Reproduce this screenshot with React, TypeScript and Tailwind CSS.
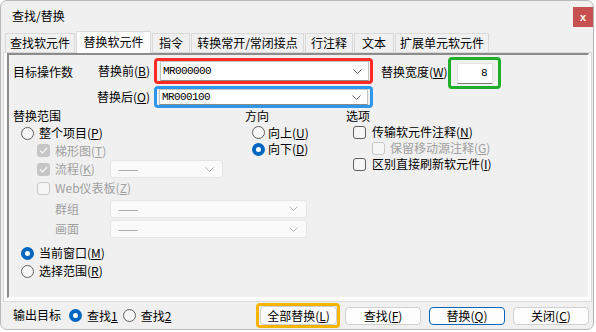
import React from "react";

const tabs = [
    { label: "查找软元件", w: 70 },
    { label: "替换软元件", w: 75, active: true },
    { label: "指令", w: 38 },
    { label: "转换常开/常闭接点", w: 113 },
    { label: "行注释", w: 48 },
    { label: "文本", w: 40 },
    { label: "扩展单元软元件", w: 94 },
];

function U({ children }: { children: React.ReactNode }) {
    return <span className="underline underline-offset-1">{children}</span>;
}

function Chevron({ color = "#5f5f5f" }: { color?: string }) {
    return (
        <svg width="9" height="5" viewBox="0 0 9 5">
            <path d="M0.5 0.5 L4.5 4.5 L8.5 0.5" fill="none" stroke={color} strokeWidth="1" />
        </svg>
    );
}

function Radio({ checked }: { checked?: boolean }) {
    if (checked) {
        return (
            <span className="flex h-[13px] w-[13px] shrink-0 items-center justify-center rounded-full bg-[#0067c0]">
                <span className="h-[5px] w-[5px] rounded-full bg-white" />
            </span>
        );
    }
    return <span className="h-[13px] w-[13px] shrink-0 rounded-full border border-[#5f5f5f] bg-[#f6f6f6]" />;
}

function Check({ checked, disabled }: { checked?: boolean; disabled?: boolean }) {
    if (checked) {
        return (
            <span className="flex h-[13px] w-[13px] shrink-0 items-center justify-center rounded-[3px] bg-[#c6c6c6]">
                <svg width="9" height="7" viewBox="0 0 9 7">
                    <path d="M1 3.5 L3.5 6 L8 1" fill="none" stroke="#f4f4f4" strokeWidth="1.3" />
                </svg>
            </span>
        );
    }
    return (
        <span
            className={`h-[13px] w-[13px] shrink-0 rounded-[3px] border ${disabled ? "border-[#c8c8c8] bg-[#f6f6f6]" : "border-[#5f5f5f] bg-[#f6f6f6]"
                }`}
        />
    );
}

function DisabledCombo({ w, h }: { w: string; h: string }) {
    return (
        <div className={`flex shrink-0 items-center justify-between rounded-[3px] border border-[#e6e6e6] bg-[#fafafa] pl-[7px] pr-[8px] text-[#9a9a9a] ${w} ${h}`}>
            <span className="leading-[14px]">——</span>
            <Chevron color="#b4b4b4" />
        </div>
    );
}

function Combo({ value, h }: { value: string; h: string }) {
    return (
        <div className={`flex w-[209px] shrink-0 items-center justify-between border border-[#c4c4c4] border-b-[#8a8a8a] bg-white pl-[2px] pr-[6px] ${h}`}>
            <span className="font-['Liberation_Mono',monospace] text-[11px] leading-[14px] tracking-[-0.6px]">{value}</span>
            <Chevron />
        </div>
    );
}

function Btn({ children, primary }: { children: React.ReactNode; primary?: boolean }) {
    return (
        <div
            className={`flex h-[18px] w-[76px] shrink-0 items-center justify-center rounded-[4px] border bg-[#fdfdfd] leading-[14px] ${primary ? "border-[#0067c0]" : "border-[#d0d0d0]"
                }`}
        >
            {children}
        </div>
    );
}

export default function App() {
    return (
        <div className="h-[332px] w-[596px] bg-white font-['Noto_Sans_CJK_SC','Noto_Sans_CJK_JP',sans-serif] text-[12px] leading-[16px] text-black">
            <div className="flex h-[330px] w-[594px] flex-col overflow-hidden rounded-[7px] border border-[#b8b8b8] bg-[#f0f0f0]">
                {/* Title */}
                <div className="flex h-[29px] shrink-0 items-start justify-between">
                    <span className="ml-[11px] mt-[7px]">查找/替换</span>
                    <div className="mt-[6px] flex h-[20px] w-[20px] items-center justify-center bg-[#c75050] font-['Liberation_Sans',sans-serif] text-[11px] font-bold leading-none text-white">
                        x
                    </div>
                </div>

                {/* Tabs */}
                <div className="flex h-[22px] shrink-0 items-end gap-[1px] pl-[4px]">
                    {tabs.map(t => (
                        <div
                            key={t.label}
                            style={{ width: t.w }}
                            className={`flex shrink-0 items-center justify-center whitespace-nowrap border border-b-0 border-[#d9d9d9] ${t.active ? "relative z-10 -mb-px h-[22px] bg-[#fbfbfb] pb-[2px]" : "h-[19px] bg-[#f0f0f0]"
                                }`}
                        >
                            {t.label}
                        </div>
                    ))}
                </div>

                {/* Panel */}
                <div className="ml-[2px] flex h-[250px] w-[589px] shrink-0 border border-[#d9d9d9] bg-[#fbfbfb] pb-[3px] pl-[3px] pr-[2px]">
                    <div className="flex flex-1 flex-col border-b border-l-2 border-r border-t-2 border-[#8c8c8c] border-b-white border-r-white bg-[#f0f0f0]">
                        {/* Target operand */}
                        <div className="flex h-[53px] shrink-0">
                            <div className="ml-[4px] mt-[9px] w-[79px] shrink-0 whitespace-nowrap">目标操作数</div>
                            <div className="flex shrink-0 flex-col">
                                <div className="mt-[3px] flex h-[26px] items-center">
                                    <span className="w-[62px] shrink-0 whitespace-nowrap pr-[4px] text-right">替换前(<U>B</U>)</span>
                                    <div className="flex h-[26px] w-[219px] shrink-0 items-center rounded-[4px] border-[3px] border-[#ff2a23] pl-[3px]">
                                        <Combo value="MR000000" h="h-[20px]" />
                                    </div>
                                </div>
                                <div className="mt-[2px] flex h-[22px] items-center">
                                    <span className="w-[62px] shrink-0 whitespace-nowrap pr-[4px] text-right">替换后(<U>O</U>)</span>
                                    <div className="flex h-[22px] w-[219px] shrink-0 items-center rounded-[4px] border-[3px] border-[#2f97eb] pl-[2px]">
                                        <Combo value="MR000100" h="h-[16px]" />
                                    </div>
                                </div>
                            </div>
                            <div className="ml-[8px] mt-[9px] w-[67px] shrink-0 whitespace-nowrap">替换宽度(<U>W</U>)</div>
                            <div className="mt-[2px] flex h-[32px] w-[53px] shrink-0 items-center justify-center rounded-[4px] border-[3px] border-[#1fae2a]">
                                <div className="flex h-[21px] w-[36px] items-center justify-end border border-[#e3e3e3] border-b-[#7a7a7a] bg-white pr-[4px] font-['Liberation_Mono',monospace] text-[11px]">
                                    8
                                </div>
                            </div>
                        </div>

                        {/* Range / direction / options */}
                        <div className="flex whitespace-nowrap">
                            <div className="ml-[4px] flex w-[232px] shrink-0 flex-col">
                                <div className="h-[16px]">替换范围</div>
                                <div className="flex h-[18px] items-center gap-[5px] pl-[8px]">
                                    <Radio />
                                    <span>整个项目(<U>P</U>)</span>
                                </div>
                                <div className="flex h-[17px] items-center gap-[5px] pl-[24px] text-[#a0a0a0]">
                                    <Check checked disabled />
                                    <span>梯形图(<U>T</U>)</span>
                                </div>
                                <div className="flex h-[20px] items-center pl-[24px] text-[#a0a0a0]">
                                    <div className="flex w-[73px] shrink-0 items-center gap-[5px]">
                                        <Check checked disabled />
                                        <span>流程(<U>K</U>)</span>
                                    </div>
                                    <DisabledCombo w="w-[113px]" h="h-[18px]" />
                                </div>
                                <div className="flex h-[18px] items-center gap-[5px] pl-[24px] text-[#a0a0a0]">
                                    <Check disabled />
                                    <span>Web仪表板(<U>Z</U>)</span>
                                </div>
                                <div className="flex h-[23px] items-center pl-[42px] text-[#a0a0a0]">
                                    <span className="w-[55px] shrink-0">群组</span>
                                    <DisabledCombo w="w-[197px]" h="h-[18px]" />
                                </div>
                                <div className="flex h-[18px] items-center pl-[42px] text-[#a0a0a0]">
                                    <span className="w-[55px] shrink-0">画面</span>
                                    <DisabledCombo w="w-[197px]" h="h-[18px]" />
                                </div>
                                <div className="mt-[6px] flex h-[18px] items-center gap-[5px] pl-[8px]">
                                    <Radio checked />
                                    <span>当前窗口(<U>M</U>)</span>
                                </div>
                                <div className="flex h-[18px] items-center gap-[5px] pl-[8px]">
                                    <Radio />
                                    <span>选择范围(<U>R</U>)</span>
                                </div>
                            </div>

                            <div className="flex w-[101px] shrink-0 flex-col">
                                <div className="h-[16px]">方向</div>
                                <div className="flex h-[17px] items-center gap-[3px] pl-[7px]">
                                    <Radio />
                                    <span>向上(<U>U</U>)</span>
                                </div>
                                <div className="flex h-[16px] items-center gap-[3px] pl-[7px]">
                                    <Radio checked />
                                    <span>向下(<U>D</U>)</span>
                                </div>
                            </div>

                            <div className="flex flex-col leading-[14px]">
                                <div className="h-[16px] leading-[16px]">选项</div>
                                <div className="flex h-[16px] items-center gap-[6px] pl-[7px]">
                                    <Check />
                                    <span>传输软元件注释(<U>N</U>)</span>
                                </div>
                                <div className="flex h-[16px] items-center gap-[5px] pl-[26px] text-[#a0a0a0]">
                                    <Check disabled />
                                    <span>保留移动源注释(<U>G</U>)</span>
                                </div>
                                <div className="flex h-[16px] items-center gap-[6px] pl-[7px]">
                                    <Check />
                                    <span>区别直接刷新软元件(<U>I</U>)</span>
                                </div>
                            </div>
                        </div>
                    </div>
                </div>

                {/* Bottom bar */}
                <div className="flex h-[27px] shrink-0 items-center whitespace-nowrap pl-[12px] pr-[4px]">
                    <span className="mb-[2px] mr-[8px]">输出目标</span>
                    <Radio checked />
                    <span className="ml-[5px] mr-[5px]">查找<U>1</U></span>
                    <Radio />
                    <span className="ml-[5px]">查找<U>2</U></span>

                    <div className="ml-auto flex items-center gap-[8px]">
                        <div className="-mr-[3px] flex h-[25px] w-[84px] shrink-0 items-center rounded-[4px] border-[3px] border-[#f8b500] pl-[1px]">
                            <div className="flex h-[19px] w-[77px] items-center justify-center rounded-[4px] border border-[#d0d0d0] bg-[#fdfdfd] leading-[14px]">
                                全部替换(<U>L</U>)
                            </div>
                        </div>
                        <Btn>查找(<U>F</U>)</Btn>
                        <Btn primary>替换(<U>Q</U>)</Btn>
                        <Btn>关闭(<U>C</U>)</Btn>
                    </div>
                </div>
            </div>
        </div>
    );
}
